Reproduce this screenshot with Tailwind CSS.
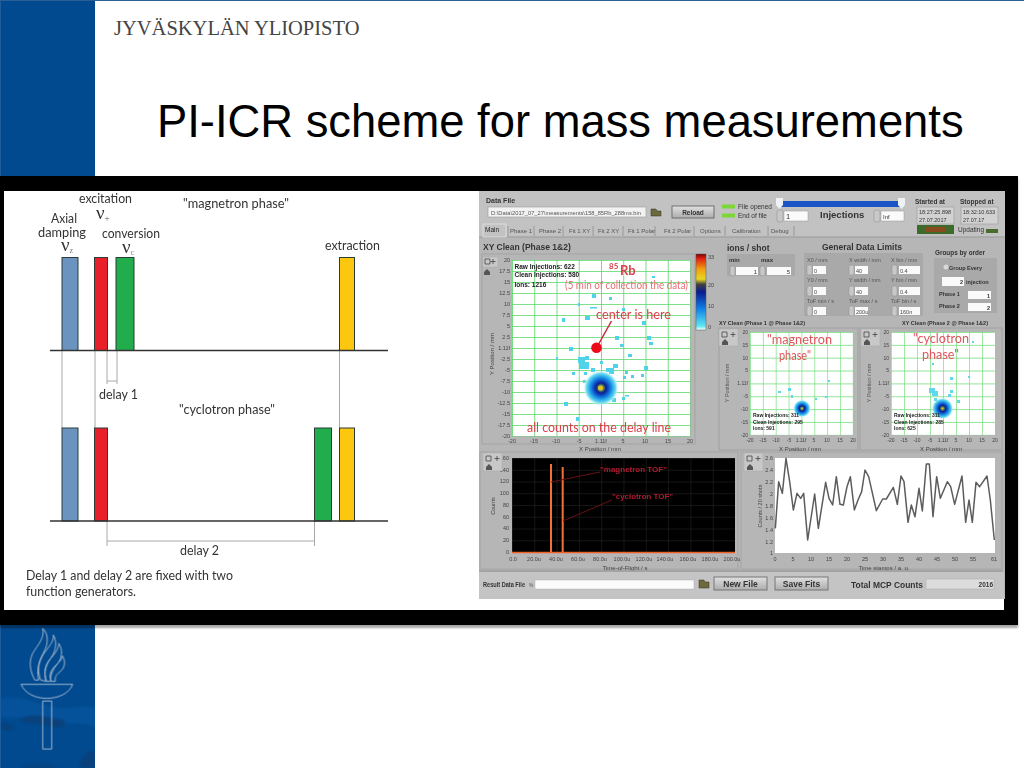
<!DOCTYPE html>
<html lang="fi">
<head>
<meta charset="utf-8">
<title>PI-ICR scheme for mass measurements</title>
<script src="https://cdn.jsdelivr.net/npm/@tailwindcss/browser@4"></script>
</head>
<body class="bg-white">
<div class="relative flex w-[1024px] h-[768px] overflow-hidden bg-white border-t border-[#2b5f98]">
  <aside class="w-[95px] h-full shrink-0 flex flex-col justify-end bg-[#014a8f] border-l border-[#1f5c9c]">
    <svg width="94" height="148" viewBox="3 0 282 444" fill="none">
      <g class="blur-[3px]">
        <path d="M0 235 C60 225 110 250 170 262 C210 270 250 250 285 262 L285 320 C230 300 200 320 160 300 C110 285 60 300 0 290Z" fill="#0a5aa5" opacity=".55"/>
        <path d="M60 300 C90 275 130 290 190 300 C210 315 180 330 140 315 C100 305 80 315 60 300Z" fill="#0c3f78" opacity=".85"/>
        <path d="M0 310 C30 305 50 320 40 330 C20 335 5 325 0 325Z" fill="#0c3f78" opacity=".7"/>
        <path d="M240 444 C240 410 265 385 285 395 L285 444Z" fill="#0c3f78" opacity=".8"/>
        <path d="M60 444 C90 425 140 430 180 444Z" fill="#0c3f78" opacity=".6"/>
      </g>
      <g stroke="#aebfd4" stroke-width="2.8" stroke-linejoin="round">
        <path d="M104 180 C92 155 84 130 98 100 C112 75 135 55 128 25 C145 40 146 70 132 95 C120 118 108 140 116 180Z"/>
        <path d="M122 180 C110 150 116 125 132 100 C146 80 162 65 160 45 C172 65 168 92 152 115 C138 135 130 155 138 184Z"/>
        <path d="M140 184 C128 155 138 130 152 115 C166 100 176 85 176 70 C190 90 186 115 172 132 C158 150 150 165 152 184Z"/>
        <path d="M154 184 C146 165 152 150 168 135 C178 125 186 118 188 108 C198 125 194 145 180 155 C168 165 164 172 166 184Z"/>
        <path d="M63 193 L218 193 C208 220 175 235 140 235 C105 235 75 220 63 193Z"/>
        <path d="M128 243 H155 V387 H128Z"/>
      </g>
    </svg>
  </aside>
  <main class="flex-1 flex flex-col">
    <p class="ml-[19px] mt-[15px] font-['Liberation_Serif',serif] text-[20.5px] leading-6 text-[#444444]">JYVÄSKYLÄN YLIOPISTO</p>
    <h1 class="ml-[62px] mt-[56px] font-['Liberation_Sans',Arial,sans-serif] text-[45.36px] leading-[52px] text-black whitespace-nowrap">PI-ICR scheme for mass measurements</h1>
  </main>

  <figure class="absolute left-0 top-[175px] w-[1018px] h-[449px] bg-black shadow-[0_3px_2px_rgba(0,0,0,0.35)]">
    <svg class="blur-[0.5px]" width="1018" height="449" viewBox="0 176 1018 449" font-family="Liberation Sans, Arial, sans-serif">
      <defs>
        <pattern id="g1" patternUnits="userSpaceOnUse" x="512" y="260" width="22.25" height="11">
          <path d="M0 0H22.25M0 0V11" stroke="#55d865" stroke-width="1.600" fill="none"/>
        </pattern>
        <pattern id="g2" patternUnits="userSpaceOnUse" x="750" y="332" width="12.85" height="12.85">
          <path d="M0 0H12.85M0 0V12.85" stroke="#6edc78" stroke-width="1.300" fill="none"/>
        </pattern>
        <pattern id="g3" patternUnits="userSpaceOnUse" x="891" y="332" width="13" height="12.85">
          <path d="M0 0H13M0 0V12.85" stroke="#6edc78" stroke-width="1.300" fill="none"/>
        </pattern>
        <pattern id="g4" patternUnits="userSpaceOnUse" x="512" y="458" width="22.3" height="11.75">
          <path d="M0 0H22.3M0 0V11.75" stroke="#2a2a2a" stroke-width="1" fill="none"/>
        </pattern>
        <radialGradient id="blob">
          <stop offset="0" stop-color="#e8c81e"/>
          <stop offset=".14" stop-color="#5a8a50"/>
          <stop offset=".28" stop-color="#0b1f90"/>
          <stop offset=".42" stop-color="#0e4fc8"/>
          <stop offset=".62" stop-color="#1f9fe8"/>
          <stop offset=".82" stop-color="#6fdcf0"/>
          <stop offset="1" stop-color="#ffffff" stop-opacity="0"/>
        </radialGradient>
        <linearGradient id="bar" x1="0" y1="0" x2="0" y2="1">
          <stop offset="0" stop-color="#7a0000"/>
          <stop offset=".06" stop-color="#e02010"/>
          <stop offset=".2" stop-color="#f0a010"/>
          <stop offset=".33" stop-color="#e8d820"/>
          <stop offset=".4" stop-color="#404040"/>
          <stop offset=".5" stop-color="#0a1a90"/>
          <stop offset=".72" stop-color="#1080e8"/>
          <stop offset=".95" stop-color="#60e8f0"/>
          <stop offset="1" stop-color="#ffffff"/>
        </linearGradient>
        <linearGradient id="btn" x1="0" y1="0" x2="0" y2="1">
          <stop offset="0" stop-color="#e0e0e0"/>
          <stop offset="1" stop-color="#adadad"/>
        </linearGradient>
      </defs>

      <!-- left diagram -->
      <rect x="4" y="191" width="1000" height="419" fill="#ffffff"/>
      <g stroke="#a8a8a8" stroke-width="1" fill="none">
        <path d="M62 351V428M95 351V428M339.500 351V428M107 351V384M117 351V384M107 381H117M107 521V546M314.500 521V546M107 541H314.500"/>
      </g>
      <g stroke="#2c3a3a" stroke-width="1">
        <rect x="62" y="257.500" width="16" height="93" fill="#6a93c0"/>
        <rect x="94.500" y="257.500" width="13" height="93" fill="#e8202a"/>
        <rect x="116" y="257.500" width="18" height="93" fill="#22ad4c"/>
        <rect x="339.500" y="257.500" width="15" height="93" fill="#fcc70e"/>
        <rect x="62" y="428" width="16" height="93" fill="#6a93c0"/>
        <rect x="94.500" y="428" width="13" height="93" fill="#e8202a"/>
        <rect x="314.500" y="428" width="17" height="93" fill="#22ad4c"/>
        <rect x="339.500" y="428" width="15" height="93" fill="#fcc70e"/>
      </g>
      <path d="M50 350.500H388M50 521H388" stroke="#333" stroke-width="1.300"/>
      <g font-family="Lato, sans-serif" font-size="12.500" fill="#333">
        <text x="79" y="203" textLength="53" lengthAdjust="spacingAndGlyphs">excitation</text>
        <text x="183" y="208" textLength="106" lengthAdjust="spacingAndGlyphs">"magnetron phase"</text>
        <text x="51" y="223" textLength="26" lengthAdjust="spacingAndGlyphs">Axial</text>
        <text x="38" y="237" textLength="48" lengthAdjust="spacingAndGlyphs">damping</text>
        <text x="102" y="238" textLength="58" lengthAdjust="spacingAndGlyphs">conversion</text>
        <text x="325" y="250" textLength="55" lengthAdjust="spacingAndGlyphs">extraction</text>
        <text x="99" y="399" textLength="39" lengthAdjust="spacingAndGlyphs">delay 1</text>
        <text x="179" y="414" textLength="96" lengthAdjust="spacingAndGlyphs">"cyclotron phase"</text>
        <text x="180" y="555" textLength="39" lengthAdjust="spacingAndGlyphs">delay 2</text>
        <text x="26" y="580" textLength="207" lengthAdjust="spacingAndGlyphs">Delay 1 and delay 2 are fixed with two</text>
        <text x="26" y="596" textLength="110" lengthAdjust="spacingAndGlyphs">function generators.</text>
        <text x="61" y="251" font-size="19" font-family="Liberation Serif, serif">ν<tspan font-size="8" dy="2" fill="#777">z</tspan></text>
        <text x="96" y="219" font-size="19" font-family="Liberation Serif, serif">ν<tspan font-size="9" dy="2" fill="#555">+</tspan></text>
        <text x="122" y="253" font-size="19" font-family="Liberation Serif, serif">ν<tspan font-size="8" dy="2" fill="#777">c</tspan></text>
      </g>

      <!-- instrument panel -->
      <rect x="479" y="191" width="526" height="408" fill="#b6b6b6"/>
      <rect x="479" y="191" width="526" height="46" fill="#c2c2c2"/>
      <g font-size="6.500" fill="#333">
        <text x="486" y="203" font-weight="700" font-size="7">Data File</text>
        <rect x="488" y="207" width="158" height="10" fill="#f2f2f2" stroke="#999" stroke-width=".6"/>
        <text x="491" y="214.500" font-size="6" fill="#555" textLength="150" lengthAdjust="spacingAndGlyphs">D:\Data\2017_07_27\measurements\158_85Rb_288ms.bin</text>
        <path d="M651 209H656L657 211H661V216H651Z" fill="#6c6a3a" stroke="#333" stroke-width=".5"/>
        <rect x="672" y="206" width="42" height="12" fill="url(#btn)" stroke="#666" stroke-width=".9"/>
        <text x="693" y="214.500" text-anchor="middle" font-weight="700" fill="#333">Reload</text>
        <rect x="722" y="204.500" width="13" height="4" fill="#7dd63a"/>
        <rect x="722" y="213.500" width="13" height="4" fill="#7dd63a"/>
        <text x="738" y="209">File opened</text>
        <text x="738" y="218">End of file</text>
        <rect x="778" y="201" width="125" height="6" fill="#1a55c8"/>
        <path d="M776 198H783V205L779.500 209 776 205ZM898 198H905V205L901.500 209 898 205Z" fill="#eef2f6"/>
        <rect x="777" y="210" width="6" height="12" rx="2" fill="#c8c8c8" stroke="#888" stroke-width=".5"/>
        <rect x="784" y="211" width="24" height="10" fill="#fafafa" stroke="#999" stroke-width=".5"/>
        <text x="786" y="219" font-size="7.500">1</text>
        <text x="820" y="218" font-size="9.500" font-weight="700" fill="#333">Injections</text>
        <rect x="874" y="210" width="6" height="12" rx="2" fill="#c8c8c8" stroke="#888" stroke-width=".5"/>
        <rect x="881" y="211" width="23" height="10" fill="#fafafa" stroke="#999" stroke-width=".5"/>
        <text x="883" y="218.500" font-size="6">Inf</text>
        <text x="915" y="204" font-size="6.500" font-weight="700">Started at</text>
        <text x="960" y="204" font-size="6.500" font-weight="700">Stopped at</text>
        <rect x="917" y="207" width="37" height="17" fill="#d2d2d2" stroke="#999" stroke-width=".6"/>
        <rect x="961" y="207" width="37" height="17" fill="#d2d2d2" stroke="#999" stroke-width=".6"/>
        <text x="919" y="214" font-size="5.500">18:27:25.898</text>
        <text x="919" y="222" font-size="5.500">27.07.2017</text>
        <text x="963" y="214" font-size="5.500">18:32:10.633</text>
        <text x="963" y="222" font-size="5.500">27.07.17</text>
        <rect x="917" y="225" width="37" height="9" fill="#3e6a2c"/>
        <rect x="925" y="227" width="20" height="5" fill="#8a4a20"/>
        <text x="958" y="232" font-size="6.500">Updating</text>
        <rect x="986" y="229" width="12" height="4" fill="#4a6a30"/>
      </g>
      <!-- tabs -->
      <path d="M479 237H1005" stroke="#999" stroke-width="1"/>
      <g font-size="6" fill="#555">
        <rect x="483" y="224" width="23" height="13" fill="#c2c2c2" stroke="#eee" stroke-width=".6"/>
        <text x="485" y="231.500" fill="#222" font-size="6.500">Main</text>
        <path d="M508 226V236M534 226V236M563 226V236M593 226V236M623 226V236M655 226V236M694 226V236M725 226V236M768 226V236M794 226V236" stroke="#8f8f8f" stroke-width=".8"/>
        <text x="510" y="232.500">Phase 1</text>
        <text x="539" y="232.500">Phase 2</text>
        <text x="569" y="232.500">Fit 1 XY</text>
        <text x="598" y="232.500">Fit 2 XY</text>
        <text x="628" y="232.500">Fit 1 Polar</text>
        <text x="664" y="232.500">Fit 2 Polar</text>
        <text x="700" y="232.500">Options</text>
        <text x="732" y="232.500">Calibration</text>
        <text x="771" y="232.500">Debug</text>
      </g>
      <text x="483" y="250" font-size="8.500" font-weight="700" fill="#333">XY Clean (Phase 1&amp;2)</text>

      <!-- main XY plot -->
      <rect x="482" y="254" width="213" height="190" fill="none" stroke="#a4a4a4" stroke-width="1"/>
      <rect x="512" y="260" width="178" height="176" fill="#ffffff"/>
      <rect x="512" y="260" width="178.500" height="176.500" fill="url(#g1)"/>
      <g fill="#4fd3ea">
        <rect x="652" y="276" width="3" height="2"/><rect x="592" y="294" width="4" height="4"/><rect x="609" y="297" width="3" height="3"/>
        <rect x="578" y="303" width="2" height="3"/><rect x="590" y="307" width="7" height="1.500"/><rect x="622" y="308" width="3" height="3"/>
        <rect x="562" y="318" width="3" height="4"/><rect x="585" y="316" width="5" height="4"/><rect x="642" y="321" width="4" height="4"/>
        <rect x="615" y="336" width="4" height="4"/><rect x="647" y="336" width="4" height="4"/><rect x="620" y="344" width="4" height="3"/><rect x="649" y="342" width="4" height="3"/>
        <rect x="569" y="347" width="4" height="4"/><rect x="628" y="354" width="4" height="3"/><rect x="556" y="357" width="2" height="3"/>
        <rect x="578" y="357" width="7" height="6"/><rect x="579" y="362" width="10" height="7"/><rect x="585" y="356" width="4" height="4"/>
        <rect x="600" y="361" width="3" height="3"/><rect x="613" y="364" width="5" height="4"/><rect x="606" y="368" width="8" height="4"/><rect x="609" y="371" width="5" height="3"/>
        <rect x="591" y="368" width="4" height="4"/><rect x="584" y="372" width="3" height="3"/><rect x="572" y="372" width="3" height="3"/>
        <rect x="644" y="366" width="4" height="4"/><rect x="625" y="371" width="3" height="3"/><rect x="631" y="375" width="3" height="3"/><rect x="623" y="376" width="3" height="3"/>
        <rect x="641" y="374" width="3" height="3"/><rect x="583" y="380" width="3" height="3"/><rect x="564" y="402" width="4" height="4"/>
        <rect x="576" y="417" width="3" height="4"/><rect x="622" y="397" width="3" height="3"/><rect x="625" y="395" width="4" height="1.500"/><rect x="612" y="398" width="4" height="4"/>
      </g>
      <circle cx="601" cy="388" r="18" fill="url(#blob)"/>
      <circle cx="600.500" cy="388" r="2.500" fill="#e0c020"/>
      <path d="M611.500 321L597 347" stroke="#c72a35" stroke-width="1.500"/>
      <circle cx="596.500" cy="347.700" r="5.300" fill="#ee0a16"/>
      <g font-size="6.500" font-weight="700" fill="#222">
        <text x="514.500" y="268.500">Raw Injections: 622</text>
        <text x="514.500" y="277">Clean Injections: 580</text>
        <text x="514.500" y="286.500">Ions: 1216</text>
      </g>
      <g fill="#d9414b" font-family="Lato, sans-serif">
        <text x="609" y="269" font-size="8" font-weight="700">85</text>
        <text x="620" y="275" font-size="13" font-weight="700">Rb</text>
        <text x="565" y="289" font-size="10.500" textLength="123" lengthAdjust="spacingAndGlyphs" fill="#e66f74">(5 min of collection the data)</text>
        <text x="596" y="319" font-size="13" textLength="75" lengthAdjust="spacingAndGlyphs">center is here</text>
        <text x="527" y="432" font-size="13.500" textLength="144" lengthAdjust="spacingAndGlyphs">all counts on the delay line</text>
      </g>
      <g font-size="5.500" fill="#444" text-anchor="end">
        <text x="510" y="262">20</text><text x="510" y="273">17.5</text><text x="510" y="284">15</text><text x="510" y="295">12.5</text><text x="510" y="306">10</text><text x="510" y="317">7.5</text><text x="510" y="328">5</text><text x="510" y="339">2.5</text><text x="510" y="350">1.11f</text><text x="510" y="361">-2.5</text><text x="510" y="372">-5</text><text x="510" y="383">-7.5</text><text x="510" y="394">-10</text><text x="510" y="405">-12.5</text><text x="510" y="416">-15</text><text x="510" y="427">-17.5</text><text x="510" y="438">-20</text>
      </g>
      <g font-size="5.500" fill="#444" text-anchor="middle">
        <text x="512" y="443">-20</text><text x="534" y="443">-15</text><text x="556" y="443">-10</text><text x="579" y="443">-5</text><text x="601" y="443">1.11f</text><text x="623" y="443">5</text><text x="645" y="443">10</text><text x="668" y="443">15</text><text x="690" y="443">20</text>
        <text x="600" y="451" font-size="6">X Position / mm</text>
      </g>
      <text transform="translate(494 354) rotate(-90)" font-size="6" fill="#444" text-anchor="middle">Y Position / mm</text>
      <rect x="483" y="257" width="15" height="10" fill="#c8c8c8" stroke="#aaa" stroke-width=".5"/>
      <path d="M485 259h5v5h-5zM493 259v5M490.500 261.500h5" stroke="#444" stroke-width=".8" fill="none"/>
      <path d="M484 272l3-3 3 3v3h-6z" fill="#555"/>
      <rect x="696" y="254" width="10" height="76" fill="url(#bar)" stroke="#555" stroke-width=".5"/>
      <g font-size="5.500" fill="#444">
        <text x="708" y="259">33</text><text x="708" y="287">20</text><text x="708" y="308">10</text><text x="708" y="329">0</text>
      </g>

      <!-- controls -->
      <text x="727" y="251" font-size="8.500" font-weight="700" fill="#333">ions / shot</text>
      <rect x="727" y="254" width="68" height="22" fill="#a9a9a9"/>
      <g font-size="6" fill="#333">
        <text x="729" y="262" font-weight="700">min</text><text x="761" y="262" font-weight="700">max</text>
        <rect x="730" y="266" width="5" height="10" rx="2" fill="#c8c8c8" stroke="#888" stroke-width=".5"/>
        <rect x="736" y="267" width="22" height="8" fill="#fafafa"/><text x="757" y="273.500" text-anchor="end">1</text>
        <rect x="760" y="266" width="5" height="10" rx="2" fill="#c8c8c8" stroke="#888" stroke-width=".5"/>
        <rect x="767" y="267" width="24" height="8" fill="#fafafa"/><text x="790" y="273.500" text-anchor="end">5</text>
      </g>
      <text x="822" y="249.500" font-size="8.500" font-weight="700" fill="#333" textLength="80" lengthAdjust="spacingAndGlyphs">General Data Limits</text>
      <rect x="804" y="253" width="119" height="63" fill="#a9a9a9"/>
      <g font-size="5.500" fill="#555">
        <text x="807" y="262">X0 / mm</text><text x="849" y="262">X width / mm</text><text x="891" y="262">X bin / mm</text>
        <text x="807" y="282">Y0 / mm</text><text x="849" y="282">Y width / mm</text><text x="891" y="282">Y bin / mm</text>
        <text x="807" y="303">ToF min / s</text><text x="849" y="303">ToF max / s</text><text x="891" y="303">ToF bin / s</text>
        <g fill="#fafafa">
          <rect x="813" y="266" width="13" height="8"/><rect x="855" y="266" width="13" height="8"/><rect x="899" y="266" width="21" height="8"/>
          <rect x="813" y="287" width="13" height="8"/><rect x="855" y="287" width="13" height="8"/><rect x="899" y="287" width="21" height="8"/>
          <rect x="813" y="307" width="13" height="8"/><rect x="855" y="307" width="13" height="8"/><rect x="899" y="307" width="21" height="8"/>
        </g>
        <g fill="#444">
          <text x="814" y="272.500">0</text><text x="856" y="272.500">40</text><text x="900" y="272.500">0.4</text>
          <text x="814" y="293.500">0</text><text x="856" y="293.500">40</text><text x="900" y="293.500">0.4</text>
          <text x="814" y="313.500">0</text><text x="856" y="313.500">200u</text><text x="900" y="313.500">160n</text>
        </g>
        <g fill="#c8c8c8" stroke="#888" stroke-width=".4">
          <rect x="807" y="265" width="5" height="10" rx="2"/><rect x="849" y="265" width="5" height="10" rx="2"/><rect x="892" y="265" width="5" height="10" rx="2"/>
          <rect x="807" y="286" width="5" height="10" rx="2"/><rect x="849" y="286" width="5" height="10" rx="2"/><rect x="892" y="286" width="5" height="10" rx="2"/>
          <rect x="807" y="306" width="5" height="10" rx="2"/><rect x="849" y="306" width="5" height="10" rx="2"/><rect x="892" y="306" width="5" height="10" rx="2"/>
        </g>
      </g>
      <text x="935" y="254.500" font-size="7.500" font-weight="700" fill="#333" textLength="50" lengthAdjust="spacingAndGlyphs">Groups by order</text>
      <rect x="934" y="258" width="63" height="55" fill="#a9a9a9"/>
      <g font-size="5.500" fill="#333" font-weight="700">
        <circle cx="946" cy="267" r="2.500" fill="#d8d8d8"/><text x="949" y="269.500">Group Every</text>
        <rect x="942" y="277" width="22" height="9" fill="#fafafa"/><text x="963" y="284" text-anchor="end">2</text><text x="966" y="284">injection</text>
        <text x="939" y="296">Phase 1</text><rect x="968" y="291" width="23" height="8" fill="#fafafa"/><text x="990" y="297.500" text-anchor="end">1</text>
        <text x="939" y="308">Phase 2</text><rect x="968" y="303" width="23" height="8" fill="#fafafa"/><text x="990" y="309.500" text-anchor="end">2</text>
      </g>

      <!-- side plots -->
      <g font-size="5.500" font-weight="700" fill="#333">
        <text x="719" y="324.500">XY Clean (Phase 1 @ Phase 1&amp;2)</text>
        <text x="902" y="324.500">XY Clean (Phase 2 @ Phase 1&amp;2)</text>
      </g>
      <rect x="719" y="328" width="139" height="122" fill="none" stroke="#a0a0a0"/>
      <rect x="860" y="328" width="142" height="122" fill="none" stroke="#a0a0a0"/>
      <rect x="750" y="332" width="103" height="103" fill="#ffffff"/>
      <rect x="750" y="332" width="103" height="103" fill="url(#g2)"/>
      <rect x="891" y="332" width="104" height="103" fill="#ffffff"/>
      <rect x="891" y="332" width="104" height="103" fill="url(#g3)"/>
      <circle cx="802" cy="408.500" r="9" fill="url(#blob)"/>
      <circle cx="942.500" cy="408.500" r="11" fill="url(#blob)"/>
      <g fill="#5fd8ee">
        <rect x="788" y="388" width="3" height="3"/><rect x="778" y="391" width="3" height="2"/><rect x="791" y="395" width="2" height="3"/><rect x="815" y="398" width="2" height="2"/><rect x="825" y="396" width="2" height="2"/><rect x="828" y="380" width="2" height="2"/>
        <rect x="929" y="388" width="6" height="5"/><rect x="932" y="391" width="6" height="5"/><rect x="948" y="394" width="3" height="3"/><rect x="950" y="390" width="3" height="3"/><rect x="950" y="377" width="3" height="3"/><rect x="968" y="376" width="2" height="2"/><rect x="934" y="398" width="3" height="3"/><rect x="957" y="400" width="3" height="3"/><rect x="972" y="341" width="2" height="2"/><rect x="932" y="363" width="2" height="2"/>
      </g>
      <g font-family="Lato, sans-serif" font-size="12.500" fill="#e0555e">
        <text x="767" y="344" textLength="65" lengthAdjust="spacingAndGlyphs">"magnetron</text>
        <text x="779" y="360" textLength="32" lengthAdjust="spacingAndGlyphs">phase"</text>
        <text x="913" y="343" textLength="56" lengthAdjust="spacingAndGlyphs">"cyclotron</text>
        <text x="922" y="359" textLength="37" lengthAdjust="spacingAndGlyphs">phase"</text>
      </g>
      <g font-size="5" font-weight="700" fill="#222">
        <text x="753" y="417">Raw Injections: 311</text><text x="753" y="424">Clean Injections: 295</text><text x="753" y="430">Ions: 591</text>
        <text x="894" y="417">Raw Injections: 311</text><text x="894" y="424">Clean Injections: 285</text><text x="894" y="430">Ions: 625</text>
      </g>
      <g font-size="5" fill="#444" text-anchor="end">
        <text x="748" y="334">20</text><text x="748" y="347">15</text><text x="748" y="360">10</text><text x="748" y="372">5</text><text x="748" y="385">1.11f</text><text x="748" y="398">-5</text><text x="748" y="411">-10</text><text x="748" y="424">-15</text><text x="748" y="437">-20</text>
        <text x="889" y="334">20</text><text x="889" y="347">15</text><text x="889" y="360">10</text><text x="889" y="372">5</text><text x="889" y="385">1.11f</text><text x="889" y="398">-5</text><text x="889" y="411">-10</text><text x="889" y="424">-15</text><text x="889" y="437">-20</text>
      </g>
      <g font-size="5" fill="#444" text-anchor="middle">
        <text x="750" y="442">-20</text><text x="763" y="442">-15</text><text x="776" y="442">-10</text><text x="789" y="442">-5</text><text x="801" y="442">1.11f</text><text x="814" y="442">5</text><text x="827" y="442">10</text><text x="840" y="442">15</text><text x="853" y="442">20</text>
        <text x="891" y="442">-20</text><text x="904" y="442">-15</text><text x="917" y="442">-10</text><text x="930" y="442">-5</text><text x="943" y="442">1.11f</text><text x="956" y="442">5</text><text x="969" y="442">10</text><text x="982" y="442">15</text><text x="995" y="442">20</text>
        <text x="800" y="451" font-size="6">X Position / mm</text><text x="941" y="451" font-size="6">X Position / mm</text>
      </g>
      <text transform="translate(729 383) rotate(-90)" font-size="5.500" fill="#555" text-anchor="middle">Y Position / mm</text>
      <text transform="translate(871 383) rotate(-90)" font-size="5.500" fill="#555" text-anchor="middle">Y Position / mm</text>
      <g fill="#c8c8c8" stroke="#aaa" stroke-width=".5">
        <rect x="719" y="329" width="19" height="17"/><rect x="861" y="329" width="19" height="17"/>
      </g>
      <path d="M722 332h5v5h-5zM733 332v5M730.500 334.500h5M864 332h5v5h-5zM875 332v5M872.500 334.500h5" stroke="#444" stroke-width=".8" fill="none"/>
      <path d="M722 342l3-3 3 3v3h-6zM864 342l3-3 3 3v3h-6z" fill="#555"/>

      <!-- TOF plot -->
      <rect x="480" y="452" width="258" height="117" fill="none" stroke="#a4a4a4"/>
      <rect x="512" y="458" width="223" height="94.500" fill="#000"/>
      <rect x="512" y="458" width="223" height="94" fill="url(#g4)"/>
      <path d="M512 552.500H735" stroke="#f0602a" stroke-width="1.300"/>
      <path d="M551 552V464M562.700 552V467" stroke="#f2703a" stroke-width="2"/>
      <path d="M551 482L600 472M563 521L612 500" stroke="#6a1018" stroke-width="1"/>
      <g font-size="7" fill="#b01c30" font-weight="700">
        <text x="600" y="472" textLength="67" lengthAdjust="spacingAndGlyphs">"magnetron TOF"</text>
        <text x="612" y="499" textLength="61" lengthAdjust="spacingAndGlyphs">"cyclotron TOF"</text>
      </g>
      <g font-size="5.500" fill="#444" text-anchor="end">
        <text x="509" y="460">160</text><text x="509" y="472">140</text><text x="509" y="483">120</text><text x="509" y="495">100</text><text x="509" y="507">80</text><text x="509" y="519">60</text><text x="509" y="530">40</text><text x="509" y="542">20</text><text x="509" y="554">0</text>
      </g>
      <g font-size="5.500" fill="#444" text-anchor="middle">
        <text x="513" y="561">0.0</text><text x="534" y="561">20.0u</text><text x="556" y="561">40.0u</text><text x="578" y="561">60.0u</text><text x="600" y="561">80.0u</text><text x="622" y="561">100.0u</text><text x="644" y="561">120.0u</text><text x="665" y="561">140.0u</text><text x="688" y="561">160.0u</text><text x="710" y="561">180.0u</text><text x="732" y="561">200.0u</text>
        <text x="625" y="570" font-size="6">Time-of-Flight / s</text>
      </g>
      <text transform="translate(495 506) rotate(-90)" font-size="5.500" fill="#444" text-anchor="middle">Counts</text>
      <rect x="483" y="453" width="19" height="18" fill="#c8c8c8" stroke="#aaa" stroke-width=".5"/>
      <path d="M486 456h5v5h-5zM497 456v5M494.500 458.500h5" stroke="#444" stroke-width=".8" fill="none"/>
      <path d="M486 467l3-3 3 3v3h-6z" fill="#555"/>

      <!-- rate plot -->
      <rect x="741" y="452" width="261" height="117" fill="none" stroke="#a4a4a4"/>
      <rect x="775" y="458" width="220" height="95" fill="#ffffff"/>
      <g transform="translate(738 445) scale(.33333)">
        <polyline fill="none" stroke="#5c5c5c" stroke-width="4.500" stroke-linejoin="round" points="112,250 122,110 133,145 144,40 155,110 166,195 177,145 188,160 197,145 209,285 230,147 241,250 263,112 273,160 284,180 295,95 306,178 316,180 327,125 337,95 349,195 360,165 371,140 381,75 392,95 415,197 434,162 445,162 466,127 478,178 489,93 498,110 510,232 520,180 531,215 543,130 553,198 565,57 574,57 585,215 596,95 607,160 628,110 638,125 650,178 672,93 683,232 693,165 703,232 714,112 725,125 747,93 757,165 769,285"/>
      </g>
      <g font-size="5.500" fill="#444" text-anchor="end">
        <text x="773" y="460">2.6</text><text x="773" y="472">2.4</text><text x="773" y="484">2.2</text><text x="773" y="496">2</text><text x="773" y="508">1.8</text><text x="773" y="520">1.6</text><text x="773" y="532">1.4</text><text x="773" y="544">1.2</text><text x="773" y="555">1</text>
      </g>
      <g font-size="5.500" fill="#444" text-anchor="middle">
        <text x="775" y="561">0</text><text x="793" y="561">5</text><text x="811" y="561">10</text><text x="829" y="561">15</text><text x="847" y="561">20</text><text x="865" y="561">25</text><text x="883" y="561">30</text><text x="901" y="561">35</text><text x="919" y="561">40</text><text x="937" y="561">45</text><text x="955" y="561">50</text><text x="973" y="561">55</text><text x="994" y="561">61</text>
        <text x="884" y="570" font-size="6">Time stamps / a. u.</text>
      </g>
      <text transform="translate(762 506) rotate(-90)" font-size="5.500" fill="#444" text-anchor="middle">Counts / 20 shots</text>
      <rect x="744" y="453" width="19" height="18" fill="#c8c8c8" stroke="#aaa" stroke-width=".5"/>
      <path d="M747 456h5v5h-5zM758 456v5M755.500 458.500h5" stroke="#444" stroke-width=".8" fill="none"/>
      <path d="M747 467l3-3 3 3v3h-6z" fill="#555"/>

      <!-- footer -->
      <path d="M479 571H1003" stroke="#9c9c9c" stroke-width="1.500"/>
      <rect x="479" y="572" width="525" height="27" fill="#c4c4c4"/>
      <text x="483" y="586.500" font-size="6.500" font-weight="700" fill="#333" textLength="42" lengthAdjust="spacingAndGlyphs">Result Data File</text>
      <text x="529" y="586.500" font-size="5" fill="#555">%</text>
      <rect x="535" y="580" width="159" height="9" fill="#fbfbfb" stroke="#aaa" stroke-width=".4"/>
      <path d="M699 580H704L705 582H709V588H699Z" fill="#6c6a3a" stroke="#333" stroke-width=".5"/>
      <rect x="714" y="577" width="53" height="13" fill="url(#btn)" stroke="#777"/>
      <text x="740.500" y="587" font-size="8.500" font-weight="700" fill="#333" text-anchor="middle">New File</text>
      <rect x="775" y="577" width="53" height="13" fill="url(#btn)" stroke="#777"/>
      <text x="801.500" y="587" font-size="8.500" font-weight="700" fill="#333" text-anchor="middle">Save Fits</text>
      <text x="851" y="587.500" font-size="8.500" font-weight="700" fill="#333" textLength="72" lengthAdjust="spacingAndGlyphs">Total MCP Counts</text>
      <rect x="926" y="579" width="68" height="10" fill="#dcdcdc" stroke="#aaa" stroke-width=".5"/>
      <text x="993" y="586.500" font-size="6.500" font-weight="700" fill="#333" text-anchor="end">2016</text>
    </svg>
  </figure>
</div>
</body>
</html>
